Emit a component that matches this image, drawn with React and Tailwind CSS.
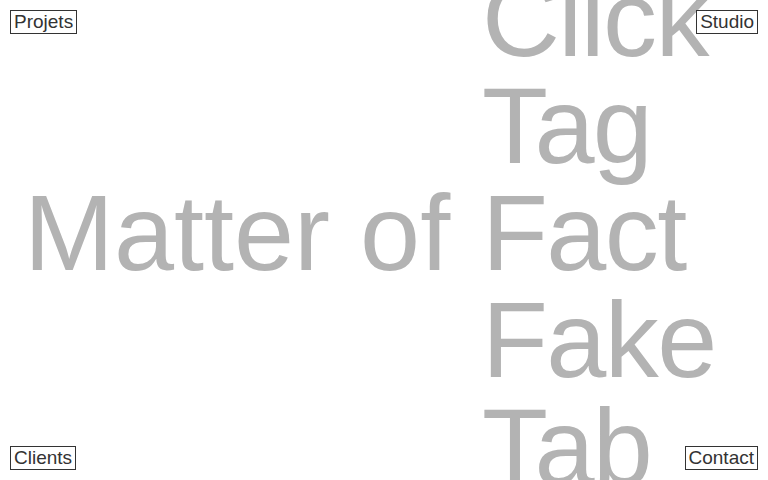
import React from 'react';

const words = ['Click', 'Tag', 'Fact', 'Fake', 'Tab'];

const CornerLink = ({ label, className }) => (
  <a
    href="#"
    className={`absolute z-10 bg-white border border-[#333] px-[3px] text-[19px] leading-[22px] text-[#333] ${className}`}
  >
    {label}
  </a>
);

export default function App() {
  return (
    <div
      className="relative h-screen w-full overflow-hidden bg-white"
      style={{ fontFamily: '"Liberation Sans", Arial, Helvetica, sans-serif' }}
    >
      <div className="flex h-full items-center pb-[16px] text-[108px] leading-[107px] text-[#b3b3b3]">
        <div className="w-[482px] shrink-0 pl-[24px] whitespace-nowrap">Matter of</div>
        <div className="flex flex-col tracking-[-0.015em] whitespace-nowrap">
          {words.map((w) => (
            <span key={w}>{w}</span>
          ))}
        </div>
      </div>

      <CornerLink label="Projets" className="top-[10px] left-[10px]" />
      <CornerLink label="Studio" className="top-[10px] right-[10px]" />
      <CornerLink label="Clients" className="bottom-[10px] left-[10px]" />
      <CornerLink label="Contact" className="bottom-[10px] right-[10px]" />
    </div>
  );
}
